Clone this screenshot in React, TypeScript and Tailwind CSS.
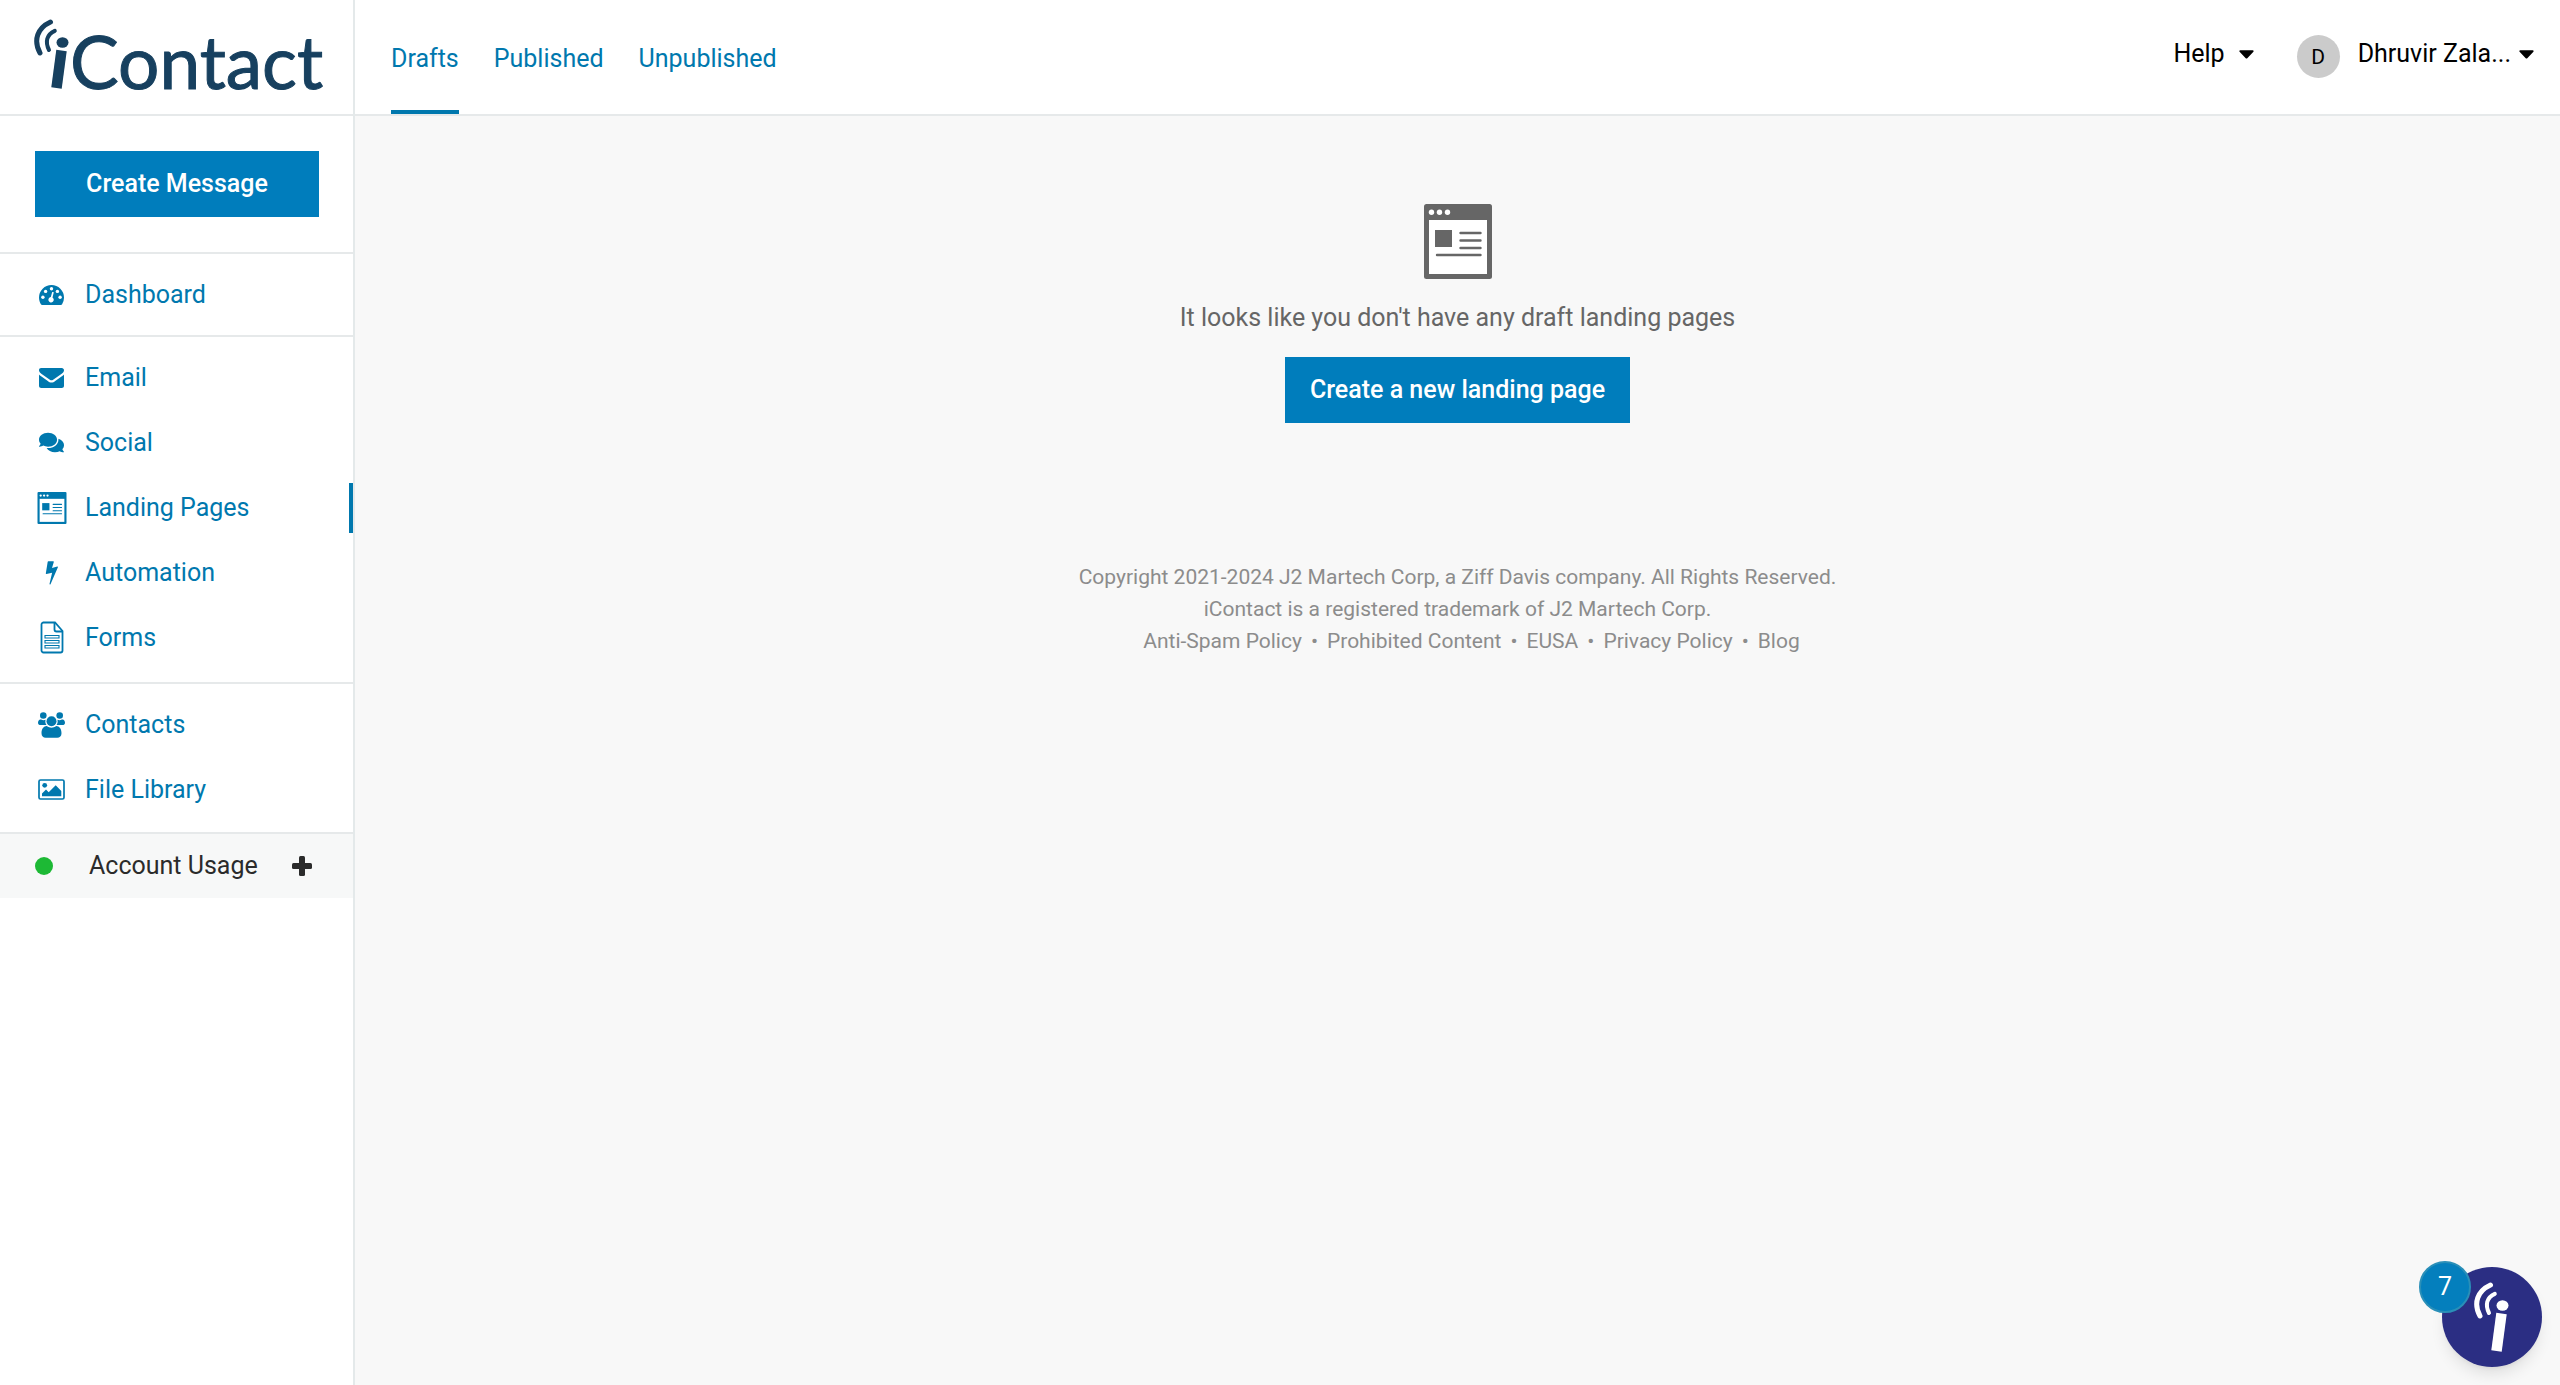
import React from 'react';
import { FaComments } from 'react-icons/fa';

interface IconProps {
  className?: string;
}

interface NavItem {
  id: string;
  label: string;
  icon: React.ReactNode;
}

interface NavGroup {
  className: string;
  items: NavItem[];
}

const DashboardIcon = () => (
  <svg width="25" height="20" viewBox="0 0 25 20" fill="currentColor" aria-hidden="true">
    <path d="M12.5 0A12.5 12.5 0 0 0 0 12.5c0 2.4.7 4.7 1.9 6.7.3.5.7.8 1.2.8h18.8c.5 0 .9-.3 1.2-.8a12.5 12.5 0 0 0 1.9-6.7A12.5 12.5 0 0 0 12.5 0Z" />
    <g fill="#fff">
      <circle cx="3.9" cy="12.3" r="1.7" />
      <circle cx="6.6" cy="6.4" r="1.7" />
      <circle cx="12.5" cy="3.8" r="1.7" />
      <circle cx="18.4" cy="6.4" r="1.7" />
      <circle cx="21.1" cy="12.3" r="1.7" />
      <path d="m14.8 7.3-1.3 5.2a2.7 2.7 0 1 1-1.7-.4l1.4-5.2Z" />
    </g>
  </svg>
);

const EnvelopeIcon = () => (
  <svg width="25" height="20" viewBox="0 0 25 20" fill="currentColor" aria-hidden="true">
    <path d="M2.2 0h20.6C24 0 25 1 25 2.2c0 1.500-1 2.700-2.300 3.600l-7.500 5.200c-1 .7-1.800 1.300-2.700 1.300s-1.700-.6-2.700-1.300L2.300 5.800C1.200 5 0 3.600 0 2.300 0 .9.8 0 2.200 0Z" />
    <path d="M25 6.600v11.100c0 1.300-1 2.300-2.200 2.300H2.200C1 20 0 19 0 17.700V6.600c.4.500.9.900 1.400 1.200l7.400 5.100c1.200.9 2.300 1.600 3.700 1.600s2.500-.7 3.700-1.600l7.400-5.100c.5-.3 1-.7 1.400-1.200Z" />
  </svg>
);

const LandingIcon: React.FC<IconProps> = ({ className }) => (
  <svg className={className} viewBox="0 0 68 75" aria-hidden="true">
    <rect width="68" height="75" rx="2.500" fill="currentColor" />
    <path fill="#fff" d="M5 16h58v54H5z" />
    <circle cx="7.500" cy="8.300" r="2.700" fill="#fff" />
    <circle cx="15.500" cy="8.300" r="2.700" fill="#fff" />
    <circle cx="23.500" cy="8.300" r="2.700" fill="#fff" />
    <path fill="currentColor" d="M11 26h17v17H11z" />
    <path
      stroke="currentColor"
      strokeWidth="2.400"
      strokeLinecap="round"
      d="M36.500 29h20M36.500 36.500h20M36.500 44h20M13 51h43.500"
    />
  </svg>
);

const BoltIcon = () => (
  <svg width="13" height="24" viewBox="0 0 13 24" fill="currentColor" aria-hidden="true">
    <path d="M3.300.3h5c.4 0 .6.3.5.7L7 6.900l5.300-1.300c.5-.1.800.300.6.700L5.500 23.200c-.3.600-1.200.4-1-.3l2.600-11.200-5.600 1.400c-.4.100-.8-.2-.7-.6L2.700.8c.1-.3.300-.5.600-.5Z" />
  </svg>
);

const FormIcon = () => (
  <svg width="24" height="33" viewBox="0 0 24 33" fill="none" stroke="currentColor" strokeWidth="1.800" aria-hidden="true">
    <path d="M3 1.500h12L22.500 10v19.500a2 2 0 0 1-2 2H3.500a2 2 0 0 1-2-2V3.500a2 2 0 0 1 2-2Z" />
    <path d="M14.500 2v6.500a2 2 0 0 0 2 2h6" />
    <path strokeWidth="1.100" d="M5 14.500h14v2.500H5zM5 19.500h14v2.500H5zM5 24.500h14v2.500H5z" />
  </svg>
);

const ContactsIcon = () => (
  <svg width="27" height="26" viewBox="0 0 27 26" fill="currentColor" aria-hidden="true">
    <circle cx="5.300" cy="3.500" r="3.300" />
    <circle cx="21.700" cy="3.500" r="3.300" />
    <path d="M3.200 7.600c1.400.8 3.200.7 4.400.1-.7 2 0 4 .9 5.400H2.700C1 13.100 0 12.200 0 10.800 0 9.400.8 7.600 2 7.400ZM23.800 7.600c-1.400.8-3.200.7-4.400.1.700 2 0 4-.9 5.400h5.800c1.700 0 2.700-.9 2.700-2.300 0-1.400-.8-3.200-2-3.400Z" />
    <circle cx="13.500" cy="9.200" r="5" />
    <path d="M8.800 14c3 2.200 6.400 2.200 9.400 0 3.200 0 5.300 3 5.300 7.300 0 2.800-1.700 4.500-4.300 4.500H7.800c-2.600 0-4.300-1.700-4.300-4.500C3.500 17 5.600 14 8.800 14Z" />
  </svg>
);

const ImageIcon = () => (
  <svg width="27" height="21" viewBox="0 0 27 21" fill="currentColor" aria-hidden="true">
    <rect x="1" y="1" width="25" height="19" rx="1.500" fill="none" stroke="currentColor" strokeWidth="1.700" />
    <circle cx="6.700" cy="6.300" r="2.400" />
    <path d="M4 17.300v-2.800l4-4 2.700 2.700 7-7 5.600 5.800v5.300Z" />
  </svg>
);

const PlusIcon: React.FC<IconProps> = ({ className }) => (
  <svg className={className} width="20" height="20" viewBox="0 0 20 20" fill="currentColor" aria-hidden="true">
    <rect x="7" width="6" height="20" rx="1.500" />
    <rect y="7" width="20" height="6" rx="1.500" />
  </svg>
);

const Caret = () => (
  <svg width="15" height="9" viewBox="0 0 15 9" fill="currentColor" aria-hidden="true">
    <path d="M1.300.3h12.400c.9 0 1.300.9.700 1.500L8.300 8.200c-.5.500-1.100.5-1.600 0L.6 1.800C0 1.200.4.3 1.300.3Z" />
  </svg>
);

// the slanted stem, its dot and the two signal waves
const SignalMark: React.FC<IconProps> = ({ className }) => (
  <svg className={className} viewBox="0 0 36 70" fill="none" stroke="currentColor" aria-hidden="true">
    <path strokeWidth="5" strokeLinecap="round" d="M16.500 3C3.500 9-1 21 6 34" />
    <path strokeWidth="4" strokeLinecap="round" d="M20.800 11.800C12.500 15.500 11 23 15 31" />
    <ellipse cx="28.500" cy="23.500" rx="6" ry="5.200" fill="currentColor" stroke="none" />
    <line x1="27.500" y1="31.500" x2="22.500" y2="69" strokeWidth="10.500" />
  </svg>
);

const navGroups: NavGroup[] = [
  {
    className: 'pb-2',
    items: [{ id: 'dashboard', label: 'Dashboard', icon: <DashboardIcon /> }],
  },
  {
    className: 'pb-3',
    items: [
      { id: 'email', label: 'Email', icon: <EnvelopeIcon /> },
      { id: 'social', label: 'Social', icon: <FaComments className="size-[25px]" /> },
      { id: 'landing', label: 'Landing Pages', icon: <LandingIcon className="h-8 w-[30px]" /> },
      { id: 'automation', label: 'Automation', icon: <BoltIcon /> },
      { id: 'forms', label: 'Forms', icon: <FormIcon /> },
    ],
  },
  {
    className: 'pb-[10px]',
    items: [
      { id: 'contacts', label: 'Contacts', icon: <ContactsIcon /> },
      { id: 'files', label: 'File Library', icon: <ImageIcon /> },
    ],
  },
];

const tabs = ['Drafts', 'Published', 'Unpublished'];
const footerLinks = ['Anti-Spam Policy', 'Prohibited Content', 'EUSA', 'Privacy Policy', 'Blog'];

const Sidebar = () => (
  <aside className="w-[355px] shrink-0 border-r-2 border-[#e4e9ea] bg-white">
    <a href="#home" aria-label="iContact" className="flex h-[116px] border-b-2 border-[#e6e9ea] pt-[19px] pl-[34px] text-[#17405f]">
      <SignalMark className="h-[70px] w-9 shrink-0" />
      <span className="font-['Lato',sans-serif] text-[73px] leading-[84px] [-webkit-text-stroke:1px_#17405f]">Contact</span>
    </a>

    <div className="py-[35px] pr-[34px] pl-[35px]">
      <button className="h-[66px] w-full bg-[#007dbc] font-medium text-white">Create Message</button>
    </div>

    <nav>
      {navGroups.map((group) => (
        <ul key={group.items[0].id} className={`border-t-2 border-[#e6e9ea] pt-2 ${group.className}`}>
          {group.items.map((item) => (
            <li key={item.id} className="relative">
              <a href={`#${item.id}`} className="flex h-[65px] items-center text-[#0078ae]">
                <span className="ml-9 flex w-[31px] justify-center">{item.icon}</span>
                <span className="ml-[18px]">{item.label}</span>
              </a>
              {item.id === 'landing' && (
                <span className="absolute top-2 right-0 h-[50px] w-1 bg-[#0078ae]" />
              )}
            </li>
          ))}
        </ul>
      ))}
    </nav>

    <button className="flex h-[66px] w-full items-center border-t-2 border-[#e6e9ea] bg-[#f7f8f8] pl-[35px] text-[#2b2b2b]">
      <span className="size-[18px] rounded-full bg-[#1db935]" />
      <span className="ml-9">Account Usage</span>
      <PlusIcon className="ml-[34px]" />
    </button>
  </aside>
);

const Header = () => (
  <header className="flex h-[116px] justify-between border-b-2 border-[#e6e9ea] bg-white">
    <nav className="flex gap-[35px] pl-9">
      {tabs.map((tab, i) => (
        <a
          key={tab}
          href={`#${tab.toLowerCase()}`}
          className={`flex items-center border-b-4 pt-2 text-[#0078ae] ${i === 0 ? 'border-[#0078ae]' : 'border-transparent'}`}
        >
          {tab}
        </a>
      ))}
    </nav>
    <div className="flex items-start pt-[35px] pr-[26px] leading-[38px] text-black">
      <button className="flex items-center gap-[14px]">
        Help
        <Caret />
      </button>
      <button className="ml-[43px] flex items-start">
        <span className="flex size-[43px] items-center justify-center rounded-full bg-[#cbcbcb] text-[21px]">D</span>
        <span className="ml-[18px] flex items-center gap-2">
          Dhruvir Zala...
          <Caret />
        </span>
      </button>
    </div>
  </header>
);

const App: React.FC = () => {
  return (
    <div className="flex min-h-screen bg-[#f8f8f8] font-['Roboto',sans-serif] text-[25px] leading-8">
      <Sidebar />

      <div className="flex-1">
        <Header />

        <main className="flex flex-col items-center pt-[88px] text-[#666]">
          <LandingIcon className="h-[75px] w-[68px]" />
          <p className="mt-[23px]">It looks like you don't have any draft landing pages</p>
          <button className="mt-[23px] h-[66px] bg-[#007dbc] px-[25px] font-medium text-white">
            Create a new landing page
          </button>
        </main>

        <footer className="mt-[138px] text-center text-[21px] text-[#8c8c8c]">
          <p>Copyright 2021-2024 J2 Martech Corp, a Ziff Davis company. All Rights Reserved.</p>
          <p>iContact is a registered trademark of J2 Martech Corp.</p>
          <ul className="flex justify-center pl-7">
            {footerLinks.map((link, i) => (
              <li key={link}>
                {i > 0 && <span className="mx-[9px]">•</span>}
                <a href="#footer">{link}</a>
              </li>
            ))}
          </ul>
        </footer>
      </div>

      <button aria-label="Open help, 7 new" className="fixed right-[18px] bottom-[18px] size-[100px] rounded-full bg-[#2b2e83] text-white shadow-lg">
        <SignalMark className="absolute top-[15px] left-8 h-[70px] w-9" />
        <span className="absolute -top-1.5 -left-[23px] flex size-[52px] items-center justify-center rounded-full border-2 border-[#2a8fb8] bg-[#047fbd]">
          7
        </span>
      </button>
    </div>
  );
};

export default App;
